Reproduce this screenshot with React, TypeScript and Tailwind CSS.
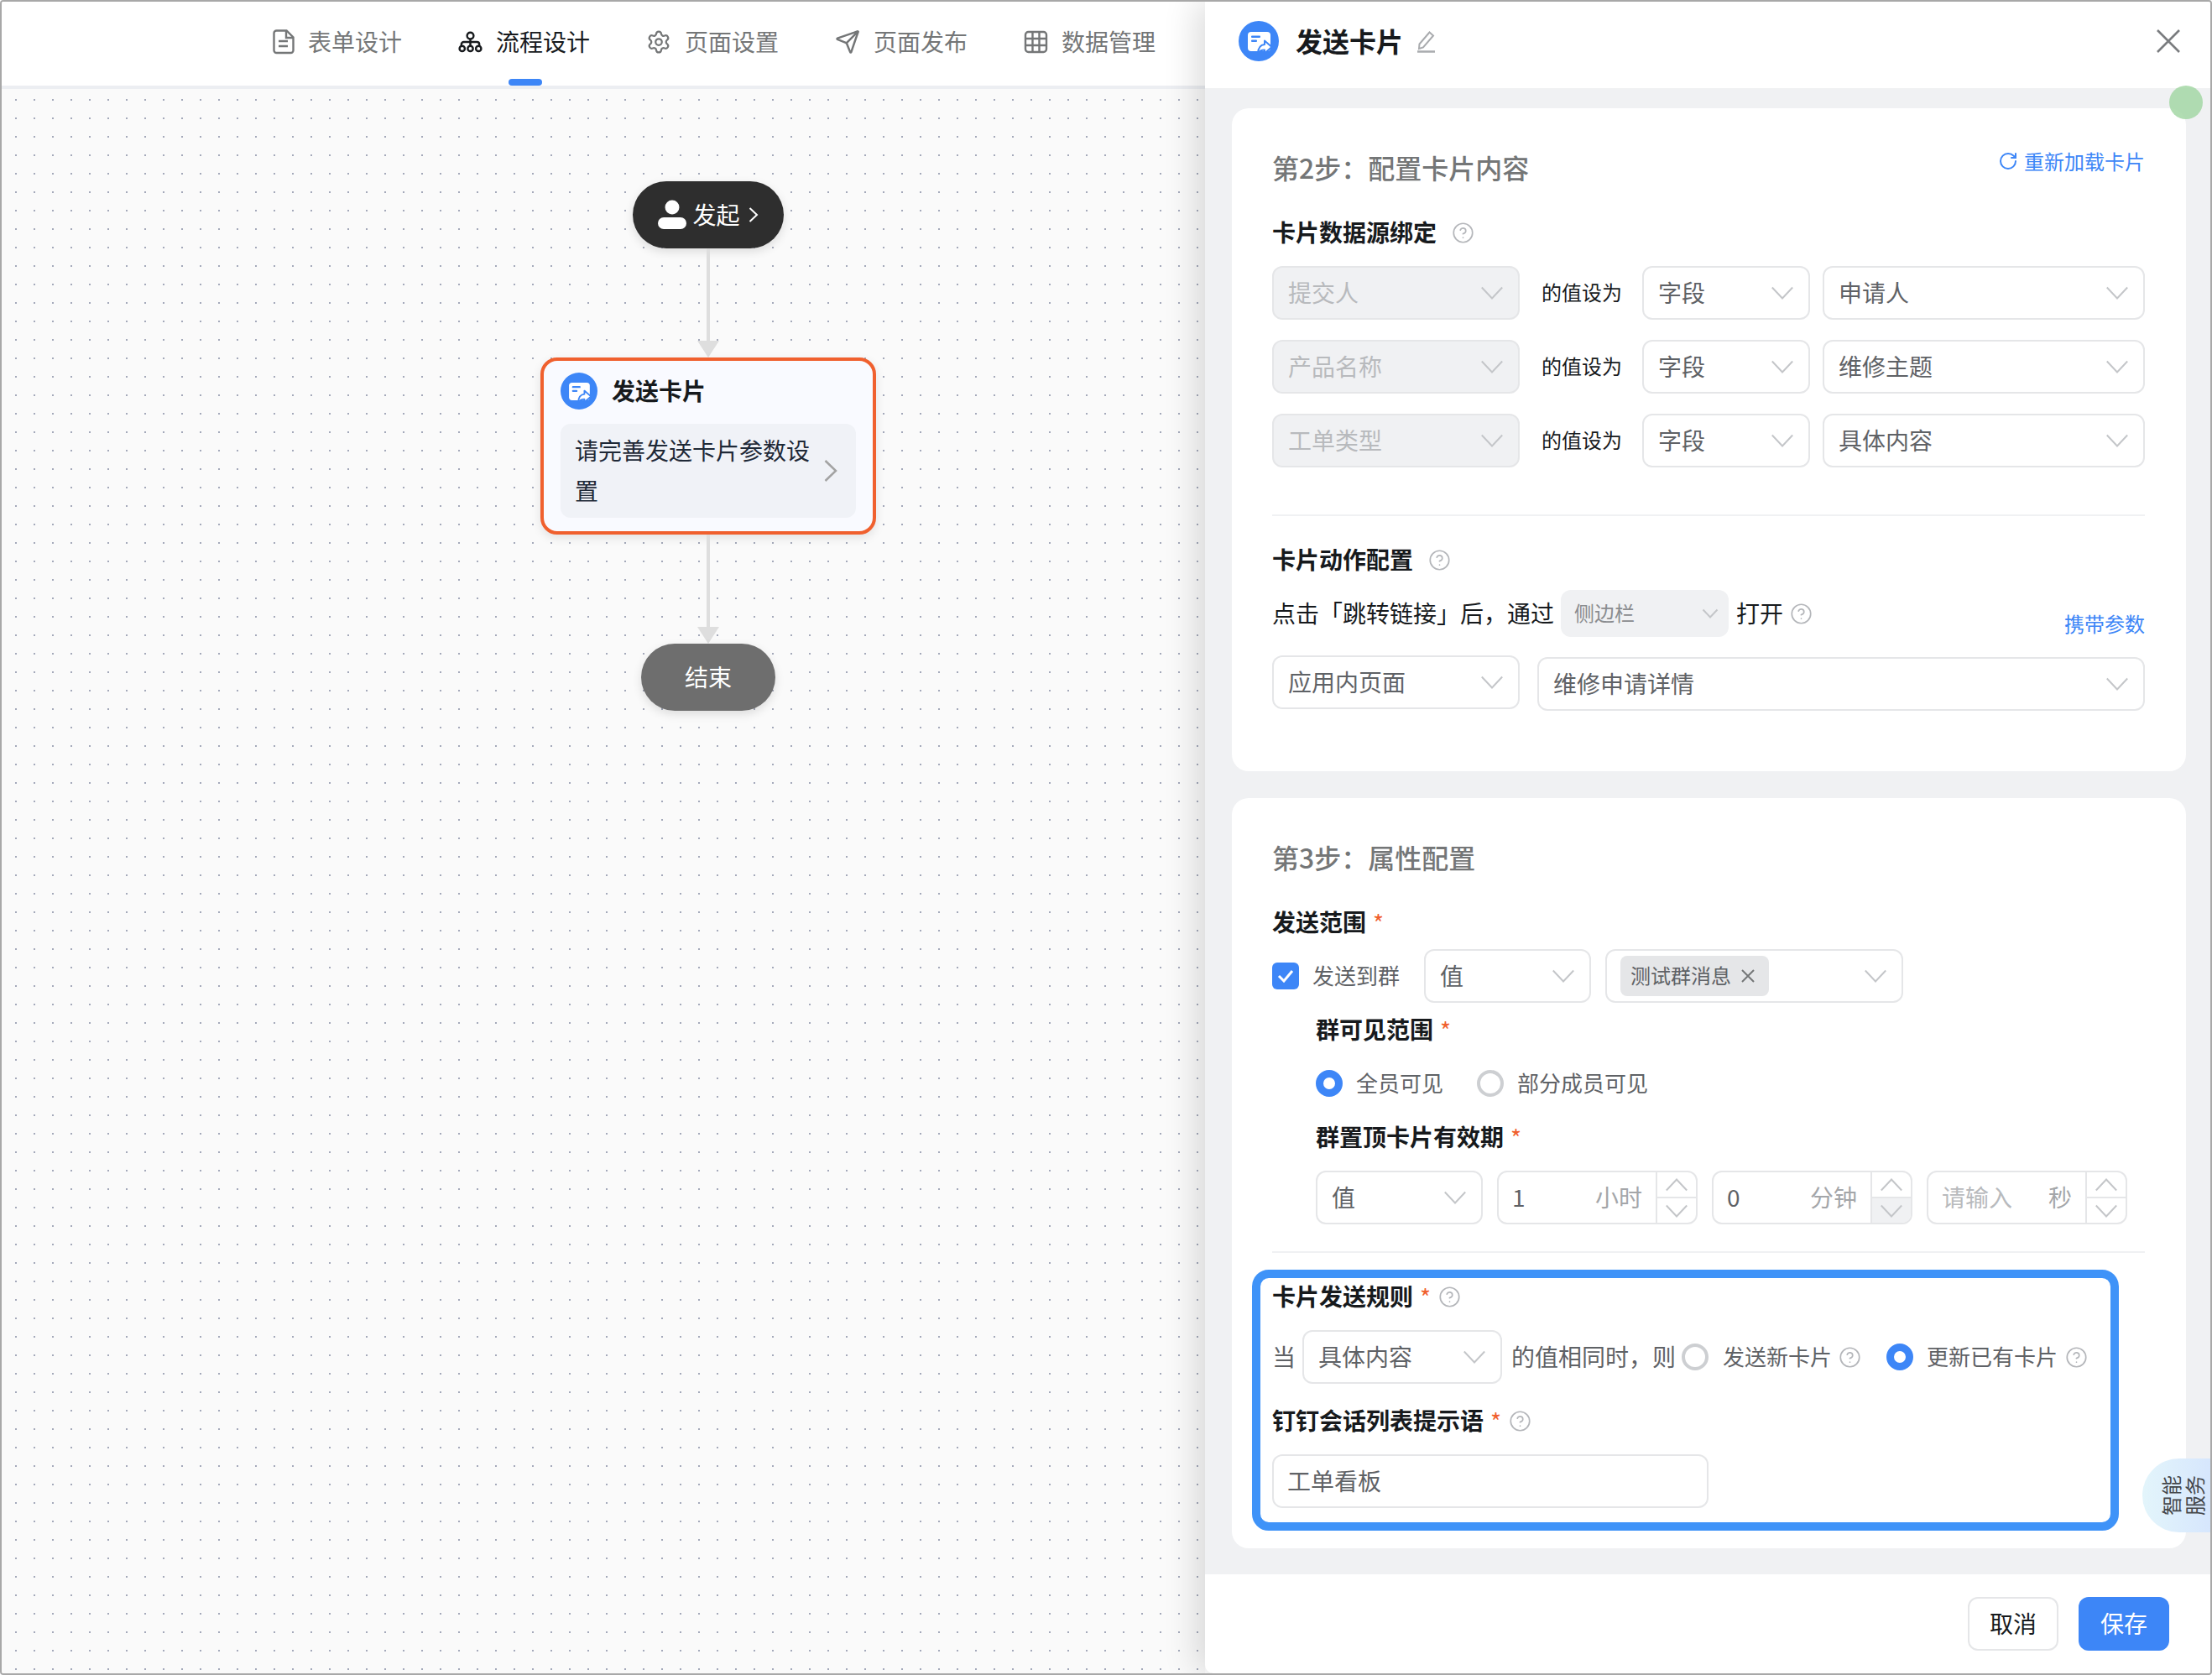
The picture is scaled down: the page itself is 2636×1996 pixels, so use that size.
import { CircleHelp, RotateCw, Settings, Send } from 'lucide-react';
import type { ReactNode } from 'react';

const Chevron = ({ up = false }: { up?: boolean }) => (
    <svg width="26" height="16" viewBox="0 0 26 16" fill="none" className={up ? 'rotate-180 shrink-0' : 'shrink-0'}>
        <path d="M0.8 1.5 13 14.5 25.2 1.5" stroke="#c4c6c9" strokeWidth="2" />
    </svg>
);

const Help = () => <CircleHelp size={27} strokeWidth={1.5} color="#b4b6ba" className="shrink-0" />;

const Star = () => <span className="text-[28px] font-normal text-[#f0602e] ml-2 leading-none">*</span>;

const CardIcon = ({ size }: { size: number }) => (
    <svg width={size} height={size} viewBox="0 0 48 48" className="shrink-0">
        <circle cx="24" cy="24" r="24" fill="#3d86f7" />
        <rect x="11" y="13" width="27" height="23" rx="4" fill="#fff" />
        <rect x="15" y="17.5" width="11" height="2.5" rx="1" fill="#3d86f7" />
        <rect x="15" y="22.5" width="7" height="2.5" rx="1" fill="#3d86f7" />
        <path d="M31 23.5 39.5 31 31 38.5v-4c-3.5 0-6 1-8 4 .3-6 3.4-10 8-10.5Z" fill="#fff" stroke="#3d86f7" strokeWidth="2" strokeLinejoin="round" />
    </svg>
);

function Select({ width, children, disabled, className = '' }: { width: string; children?: ReactNode; disabled?: boolean; className?: string }) {
    return (
        <div className={`${width} ${className} h-16 shrink-0 rounded-xl border-2 border-[#e5e6e8] flex items-center justify-between pl-[17px] pr-[18px] text-[28px] ${disabled ? 'bg-[#f0f1f3] text-[#b8babd]' : 'bg-white text-[#5f6266]'}`}>
            <span className="leading-[36px] pb-0.5">{children}</span>
            <Chevron />
        </div>
    );
}

function BindRow({ from, to }: { from: string; to: string }) {
    return (
        <div className="flex items-center">
            <Select width="w-[295px]" disabled>{from}</Select>
            <span className="ml-[26px] w-[120px] pb-0.5 text-[24px] leading-[32px] text-[#171a1d]">的值设为</span>
            <Select width="w-[200px]">字段</Select>
            <Select width="w-[384px]" className="ml-[15px]">{to}</Select>
        </div>
    );
}

function Label({ children, required, help }: { children: ReactNode; required?: boolean; help?: boolean }) {
    return (
        <div className="h-10 flex items-center text-[28px] leading-[36px] font-semibold text-[#171a1d]">
            <span className="pb-0.5">{children}</span>
            {required && <Star />}
            {help && <span className={required ? 'ml-[9px]' : 'ml-[18px]'}><Help /></span>}
        </div>
    );
}

const Radio = ({ on }: { on?: boolean }) => (
    <span className={`block w-8 h-8 rounded-full shrink-0 bg-white ${on ? 'border-[9px] border-[#3d86f7]' : 'border-[4px] border-[#cdcfd2]'}`} />
);

function Stepper({ value, unit, placeholder, pressed }: { value: string; unit: string; placeholder?: boolean; pressed?: boolean }) {
    return (
        <div className="w-[239px] h-16 rounded-xl border-2 border-[#e5e6e8] flex overflow-hidden text-[28px] leading-[36px]">
            <div className="flex-1 flex items-center justify-between pl-4 pr-[16px]">
                <span className={`pb-0.5 ${placeholder ? 'text-[#b8babd]' : 'text-[#5f6266]'}`}>{value}</span>
                <span className="pb-0.5 text-[#a4a6a9]">{unit}</span>
            </div>
            <div className="w-12 border-l-2 border-[#e5e6e8] flex flex-col">
                <div className="flex-1 flex items-center justify-center border-b-2 border-[#e5e6e8]"><Chevron up /></div>
                <div className={`flex-1 flex items-center justify-center ${pressed ? 'bg-[#f0f1f3]' : ''}`}><Chevron /></div>
            </div>
        </div>
    );
}

function Tab({ icon, label, active }: { icon: ReactNode; label: string; active?: boolean }) {
    return (
        <div className={`relative h-full pb-1 flex items-center gap-4 text-[28px] leading-[36px] ${active ? 'text-[#171a1d]' : 'text-[#747677]'}`}>
            {icon}
            <span className="pb-0.5">{label}</span>
            {active && <div className="absolute bottom-0 left-[60px] w-10 h-2 rounded-full bg-[#3d86f7]" />}
        </div>
    );
}

const Arrow = () => (
    <>
        <div className="w-1 h-[110px] bg-[#dedede]" />
        <div className="w-0 h-0 border-x-[13px] border-x-transparent border-t-[20px] border-t-[#dedede]" />
    </>
);

function Canvas() {
    return (
        <div className="flex-1 bg-[#fafafa] bg-[radial-gradient(circle,#a4a9ba_1px,transparent_1.2px)] bg-[size:22px_22px] bg-[position:6px_2px] pl-[642px] pt-[110px]">
            <div className="w-[400px] flex flex-col items-center">
                <div className="w-[180px] h-20 rounded-full bg-[#2e2e2e] shadow-[0_4px_12px_rgba(0,0,0,0.12)] flex items-center justify-center text-[28px] leading-[36px] text-white">
                    <svg width="34" height="36" viewBox="0 0 34 36" className="mr-[7px]">
                        <circle cx="17" cy="9" r="8.5" fill="#fff" />
                        <rect x="0" y="21" width="34" height="14" rx="7" fill="#fff" />
                    </svg>
                    <span className="pb-0.5">发起</span>
                    <svg width="12" height="20" viewBox="0 0 12 20" fill="none" className="ml-[10px]">
                        <path d="M1.5 2 10 10 1.5 18" stroke="#fff" strokeWidth="2" />
                    </svg>
                </div>
                <Arrow />
                <div className="w-full h-[211px] rounded-[20px] border-4 border-[#f0602e] bg-[#f9faff] shadow-[0_4px_12px_rgba(0,0,0,0.1)] px-5 pt-[14px]">
                    <div className="flex items-center gap-[17px] h-11">
                        <CardIcon size={44} />
                        <span className="pb-0.5 text-[28px] leading-[36px] font-semibold text-[#171a1d]">发送卡片</span>
                    </div>
                    <div className="mt-[17px] h-28 rounded-xl bg-[#f0f2f7] pl-[17px] pr-[22px] flex items-center justify-between">
                        <p className="w-[282px] pb-0.5 text-[28px] leading-[48px] text-[#1f2937]">请完善发送卡片参数设置</p>
                        <svg width="16" height="28" viewBox="0 0 16 28" fill="none">
                            <path d="M1.5 2 14 14 1.5 26" stroke="#a3a3a3" strokeWidth="2.5" />
                        </svg>
                    </div>
                </div>
                <Arrow />
                <div className="w-40 h-20 pb-0.5 rounded-full bg-[#6e6e6e] shadow-[0_4px_12px_rgba(0,0,0,0.12)] flex items-center justify-center text-[28px] leading-[36px] text-white">结束</div>
            </div>
        </div>
    );
}

function StepOne() {
    return (
        <section className="bg-white rounded-[20px] pl-12 pr-[49px] pt-[49px] pb-[72px]">
            <div className="h-11 flex items-start justify-between">
                <h2 className="text-[32px] font-medium leading-[42px] text-[#747677]">第2步：配置卡片内容</h2>
                <div className="flex items-center gap-[7px] text-[24px] leading-[28px] text-[#3d86f7]">
                    <RotateCw size={24} strokeWidth={2} />
                    重新加载卡片
                </div>
            </div>
            <div className="mt-[35px]"><Label help>卡片数据源绑定</Label></div>
            <div className="mt-5 flex flex-col gap-6">
                <BindRow from="提交人" to="申请人" />
                <BindRow from="产品名称" to="维修主题" />
                <BindRow from="工单类型" to="具体内容" />
            </div>
            <div className="mt-14 h-0.5 bg-[#f0f1f3]" />
            <div className="mt-8"><Label help>卡片动作配置</Label></div>
            <div className="mt-4 h-14 flex items-center text-[28px] leading-[36px] text-[#171a1d]">
                <span className="pb-0.5">点击「跳转链接」后，通过</span>
                <div className="ml-[8px] w-[200px] h-14 rounded-xl bg-[#f0f1f3] flex items-center justify-between pl-4 pr-3 text-[24px] text-[#8a8c8f]">
                    <span className="pb-0.5">侧边栏</span>
                    <svg width="20" height="12" viewBox="0 0 20 12" fill="none"><path d="M1.5 1.5 10 10.5 18.5 1.5" stroke="#c4c6c9" strokeWidth="2" /></svg>
                </div>
                <span className="ml-[9px] pb-0.5">打开</span>
                <span className="ml-2"><Help /></span>
                <span className="ml-auto self-end text-[24px] leading-[28px] pb-0.5 text-[#3d86f7]">携带参数</span>
            </div>
            <div className="mt-[22px] flex items-start gap-[21px]">
                <Select width="w-[295px]">应用内页面</Select>
                <Select width="flex-1" className="mt-0.5">维修申请详情</Select>
            </div>
        </section>
    );
}

function StepTwo() {
    return (
        <section className="bg-white rounded-[20px] pl-12 pr-[49px] pt-[49px] pb-[21px] mt-8">
            <h2 className="h-11 text-[32px] font-medium leading-[42px] text-[#747677]">第3步：属性配置</h2>
            <div className="mt-[35px]"><Label required>发送范围</Label></div>
            <div className="mt-3 flex items-center">
                <span className="w-8 h-8 rounded-md bg-[#3d86f7] flex items-center justify-center">
                    <svg width="20" height="16" viewBox="0 0 20 16" fill="none"><path d="M2 8l6 6L18 2" stroke="#fff" strokeWidth="3" /></svg>
                </span>
                <span className="ml-4 pb-0.5 text-[26px] leading-[34px] text-[#5f6266]">发送到群</span>
                <Select width="w-[199px]" className="ml-[29px]">值</Select>
                <div className="ml-[17px] w-[355px] h-16 rounded-xl border-2 border-[#e5e6e8] flex items-center justify-between pl-4 pr-[18px]">
                    <span className="h-12 w-[177px] rounded-lg bg-[#e5e6e8] flex items-center justify-between pl-3 pr-4 text-[24px] text-[#5f6266]">
                        <span className="pb-0.5">测试群消息</span>
                        <svg width="18" height="18" viewBox="0 0 18 18" fill="none"><path d="M2 2l14 14M16 2 2 16" stroke="#747677" strokeWidth="2" /></svg>
                    </span>
                    <Chevron />
                </div>
            </div>
            <div className="pl-[52px]">
                <div className="mt-3"><Label required>群可见范围</Label></div>
                <div className="mt-6 h-10 flex items-center text-[26px] leading-[34px] text-[#5f6266]">
                    <Radio on />
                    <span className="ml-4 pb-0.5">全员可见</span>
                    <span className="ml-[40px]"><Radio /></span>
                    <span className="ml-4 pb-0.5">部分成员可见</span>
                </div>
                <div className="mt-6"><Label required>群置顶卡片有效期</Label></div>
                <div className="mt-5 flex gap-[17px]">
                    <Select width="w-[199px]">值</Select>
                    <Stepper value="1" unit="小时" />
                    <Stepper value="0" unit="分钟" pressed />
                    <Stepper value="请输入" unit="秒" placeholder />
                </div>
            </div>
            <div className="mt-8 h-0.5 bg-[#f0f1f3]" />
            {/* blue highlight around the send rules */}
            <div className="mt-5 -ml-6 w-[1033px] h-[311px] rounded-[20px] border-[10px] border-[#3f93f8] pl-[14px] pt-0.5">
                <Label required help>卡片发送规则</Label>
                <div className="mt-5 flex items-center text-[28px] leading-[36px] text-[#5f6266]">
                    <span className="w-9 pb-0.5">当</span>
                    <Select width="w-[238px]">具体内容</Select>
                    <span className="ml-[11px] w-[203px] pb-0.5 whitespace-nowrap">的值相同时，则</span>
                    <Radio />
                    <span className="ml-[17px] pb-0.5 text-[26px]">发送新卡片</span>
                    <span className="ml-[8px]"><Help /></span>
                    <span className="ml-[30px]"><Radio on /></span>
                    <span className="ml-4 pb-0.5 text-[26px]">更新已有卡片</span>
                    <span className="ml-[9px]"><Help /></span>
                </div>
                <div className="mt-6"><Label required help>钉钉会话列表提示语</Label></div>
                <div className="mt-5 w-[520px] h-16 pb-0.5 rounded-xl border-2 border-[#e5e6e8] flex items-center pl-4 text-[28px] leading-[36px] text-[#5f6266]">工单看板</div>
            </div>
        </section>
    );
}

export default function App() {
    return (
        <div className="relative w-[2636px] h-[1996px] border-2 border-[#a8a8a8] rounded-[4px] bg-white flex overflow-hidden font-['Noto_Sans_CJK_SC','Inter',sans-serif]">
            <div className="w-[1434px] flex flex-col">
                <div className="h-[104px] border-b-4 border-[#eceef2] bg-white pl-[323px] flex gap-[67px]">
                    <Tab
                        label="表单设计"
                        icon={
                            <svg width="26" height="30" viewBox="0 0 26 30" fill="none" stroke="#747677" strokeWidth="2.4">
                                <path d="M4.5 1.5h12l8 8V25a3 3 0 0 1-3 3h-17a3 3 0 0 1-3-3V4.5a3 3 0 0 1 3-3Z" />
                                <path d="M16 2v8h8M7 14h11M7 20h11" />
                            </svg>
                        }
                    />
                    <Tab
                        label="流程设计"
                        active
                        icon={
                            <svg width="29" height="26" viewBox="0 0 31 28" fill="none" stroke="#171a1d" strokeWidth="2.6">
                                <circle cx="15.5" cy="6" r="4.2" />
                                <circle cx="5" cy="22.5" r="3.4" />
                                <circle cx="15.5" cy="22.5" r="3.4" />
                                <circle cx="26" cy="22.5" r="3.4" />
                                <path d="M4 19v-2a3 3 0 0 1 3-3h17a3 3 0 0 1 3 3v2M15.5 10v9" />
                            </svg>
                        }
                    />
                    <Tab label="页面设置" icon={<Settings size={30} strokeWidth={1.8} color="#747677" />} />
                    <Tab label="页面发布" icon={<Send size={30} strokeWidth={2} color="#747677" />} />
                    <Tab
                        label="数据管理"
                        icon={
                            <svg width="29" height="28" viewBox="0 0 29 28" fill="none" stroke="#747677" strokeWidth="2.4">
                                <rect x="2" y="2" width="25" height="24" rx="3.5" />
                                <path d="M2 10h25M2 18h25M10.5 2v24M18.5 2v24" />
                            </svg>
                        }
                    />
                </div>
                <Canvas />
            </div>

            <div className="relative z-10 flex-1 flex flex-col bg-white rounded-bl-[10px] overflow-hidden shadow-[-10px_0_40px_rgba(0,0,0,0.14)]">
                <header className="h-[103px] shrink-0 pl-10 pr-[35px] pb-[9px] flex items-center">
                    <CardIcon size={48} />
                    <h1 className="ml-5 pb-0.5 text-[32px] leading-[42px] font-semibold text-[#171a1d]">发送卡片</h1>
                    <svg width="24" height="28" viewBox="0 0 24 28" fill="none" stroke="#a9abae" strokeWidth="2" className="ml-4">
                        <path d="M3.5 17.5 15.5 3.5l4.5 4-12 14-5 1.5.5-5.5Z" />
                        <path d="M1 26.5h21" strokeWidth="2.5" />
                    </svg>
                    <svg width="30" height="30" viewBox="0 0 30 30" fill="none" stroke="#7a7c7f" strokeWidth="2.6" className="ml-auto">
                        <path d="M2 2l26 26M28 2 2 28" />
                    </svg>
                </header>
                <main className="flex-1 min-h-0 bg-[#f0f1f3] pl-8 pr-[29px] pt-6">
                    <StepOne />
                    <StepTwo />
                </main>
                <footer className="h-[118px] shrink-0 pr-[49px] flex items-center justify-end gap-6 text-[28px] leading-[36px]">
                    <button className="w-[108px] h-16 pb-0.5 rounded-xl border-2 border-[#e5e6e8] bg-white text-[#171a1d]">取消</button>
                    <button className="w-[108px] h-16 pb-0.5 rounded-xl bg-[#3d86f7] text-white">保存</button>
                </footer>
            </div>

            {/* scroll marker + floating service tab */}
            <div className="absolute z-20 left-[2583px] top-[100px] w-10 h-10 rounded-full bg-[#a3d7a5]/85" />
            <div className="absolute z-20 left-[2551px] top-[1736px] w-[83px] h-[88px] rounded-l-[44px] bg-gradient-to-r from-[#e3f5fb] to-[#d6e6fd] pl-3 flex items-center justify-center">
                <span className="-rotate-90 text-[24px] leading-[28px] text-[#44474b] text-center">智能<br />服务</span>
            </div>
        </div>
    );
}
